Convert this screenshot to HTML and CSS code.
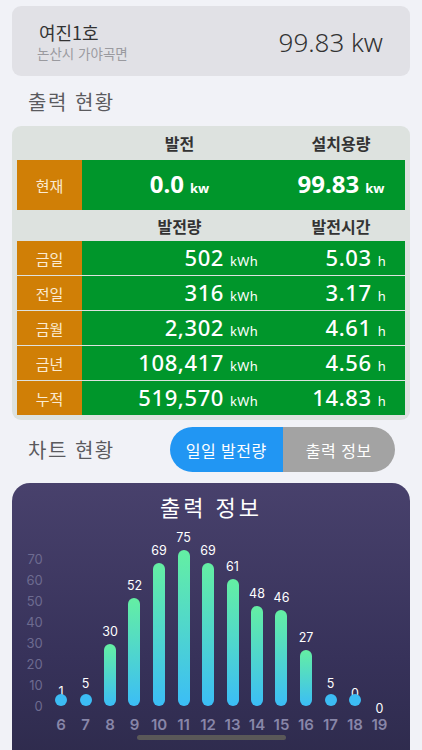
FILE: index.html
```html
<!DOCTYPE html>
<html lang="ko">
<head>
<meta charset="utf-8">
<title>여진1호</title>
<link rel="stylesheet" href="styles.css">
</head>
<body>
<div class="site">
  <div class="site-info">
    <div class="site-name">여진1호</div>
    <div class="site-addr">논산시 가야곡면</div>
  </div>
  <div class="site-cap">99.83 kw</div>
</div>

<h2 class="section-title first">출력 현황</h2>

<div class="table">
  <div class="trow head">
    <div></div><div class="hc">발전</div><div class="hc">설치용량</div>
  </div>
  <div class="trow now">
    <div class="lab">현재</div>
    <div class="nc">0.0<span class="nu">kw</span></div>
    <div class="nc">99.83<span class="nu">kw</span></div>
  </div>
  <div class="trow head head2">
    <div></div><div class="hc">발전량</div><div class="hc">발전시간</div>
  </div>
  <div class="rows">
    <div class="trow data"><div class="lab">금일</div><div class="dc">502<span class="du">kWh</span></div><div class="dc">5.03<span class="du">h</span></div></div>
    <div class="trow data"><div class="lab">전일</div><div class="dc">316<span class="du">kWh</span></div><div class="dc">3.17<span class="du">h</span></div></div>
    <div class="trow data"><div class="lab">금월</div><div class="dc">2,302<span class="du">kWh</span></div><div class="dc">4.61<span class="du">h</span></div></div>
    <div class="trow data"><div class="lab">금년</div><div class="dc">108,417<span class="du">kWh</span></div><div class="dc">4.56<span class="du">h</span></div></div>
    <div class="trow data"><div class="lab">누적</div><div class="dc">519,570<span class="du">kWh</span></div><div class="dc">14.83<span class="du">h</span></div></div>
  </div>
</div>

<div class="chart-head">
  <h2 class="section-title">차트 현황</h2>
  <div class="toggle">
    <div class="tg active">일일 발전량</div>
    <div class="tg">출력 정보</div>
  </div>
</div>

<div class="chart">
  <div class="chart-title">출력 정보</div>
  <div class="plot">
    <div class="yaxis">
      <div>70</div><div>60</div><div>50</div><div>40</div><div>30</div><div>20</div><div>10</div><div>0</div>
    </div>
    <div class="cols">
      <div class="col"><div class="stack"><div class="val" style="margin-bottom:-5px">1</div><div class="bar dot"></div></div><div class="xl">6</div></div>
      <div class="col"><div class="stack"><div class="val" style="margin-bottom:3px">5</div><div class="bar dot"></div></div><div class="xl">7</div></div>
      <div class="col"><div class="stack"><div class="val">30</div><div class="bar" style="height:62px"></div></div><div class="xl">8</div></div>
      <div class="col"><div class="stack"><div class="val">52</div><div class="bar" style="height:108px"></div></div><div class="xl">9</div></div>
      <div class="col"><div class="stack"><div class="val">69</div><div class="bar" style="height:143px"></div></div><div class="xl">10</div></div>
      <div class="col"><div class="stack"><div class="val">75</div><div class="bar" style="height:156px"></div></div><div class="xl">11</div></div>
      <div class="col"><div class="stack"><div class="val">69</div><div class="bar" style="height:143px"></div></div><div class="xl">12</div></div>
      <div class="col"><div class="stack"><div class="val">61</div><div class="bar" style="height:127px"></div></div><div class="xl">13</div></div>
      <div class="col"><div class="stack"><div class="val">48</div><div class="bar" style="height:100px"></div></div><div class="xl">14</div></div>
      <div class="col"><div class="stack"><div class="val">46</div><div class="bar" style="height:96px"></div></div><div class="xl">15</div></div>
      <div class="col"><div class="stack"><div class="val">27</div><div class="bar" style="height:56px"></div></div><div class="xl">16</div></div>
      <div class="col"><div class="stack"><div class="val" style="margin-bottom:3px">5</div><div class="bar dot"></div></div><div class="xl">17</div></div>
      <div class="col"><div class="stack"><div class="val" style="margin-bottom:-7px">0</div><div class="bar dot"></div></div><div class="xl">18</div></div>
      <div class="col"><div class="stack"><div class="val" style="margin-bottom:-10px">0</div></div><div class="xl">19</div></div>
    </div>
  </div>
  <div class="scroll"></div>
</div>
</body>
</html>
```

FILE: styles.css
```css
* { box-sizing: border-box; }
html, body { margin: 0; padding: 0; }
body {
  width: 422px;
  height: 750px;
  overflow: hidden;
  background: #f1f2f7;
  font-family: "Noto Sans CJK KR", "Noto Sans", sans-serif;
  color: #333;
}

.site {
  margin: 6px 12px 0;
  height: 70px;
  background: #e1e1e6;
  border-radius: 9px;
  display: flex;
  align-items: center;
  justify-content: space-between;
  padding: 0 27px 0 27px;
}
.site-info { display: flex; flex-direction: column; }
.site-name { font-size: 18px; line-height: 24px; color: #333; }
.site-addr { font-size: 13.5px; line-height: 18px; color: #9a9a9f; margin-left: -2px; }
.site-cap { font-family: "Noto Sans", sans-serif; font-size: 26px; font-weight: 300; color: #333; padding-top: 2px; }

.section-title {
  margin: 0;
  font-size: 20px;
  font-weight: 400;
  line-height: 26px;
  letter-spacing: 1.5px;
  color: #5a5a5e;
}
.section-title.first { margin: 13px 0 11px 28px; }

.table {
  margin: 0 12px;
  background: #dde2df;
  border-radius: 9px;
  padding: 0 5px 5px;
}
.trow {
  display: grid;
  grid-template-columns: 65px 195px 128px;
  align-items: stretch;
}
.head { height: 34px; }
.head2 { height: 31px; }
.hc {
  display: flex; align-items: center; justify-content: center;
  font-size: 16px; font-weight: 700; color: #333;
}
.lab {
  background: #d07f06;
  color: #fbebd2;
  font-size: 15px;
  display: flex; align-items: center; justify-content: center;
}
.now { height: 50px; background: #00962b; }
.nc {
  background: #00962b;
  color: #fff;
  display: flex; align-items: baseline; justify-content: center;
  font-family: "Noto Sans", sans-serif;
  font-size: 24px; font-weight: 700;
  padding-top: 7px;
}
.nu { font-size: 13px; font-weight: 700; margin-left: 6px; }
.rows { display: flex; flex-direction: column; gap: 1px; }
.data { height: 34px; }
.dc {
  background: #00962b;
  color: #fff;
  display: flex; align-items: baseline; justify-content: flex-end;
  padding-right: 19px;
  font-family: "Noto Sans", sans-serif;
  font-size: 22px; font-weight: 500;
  letter-spacing: 0.6px;
  padding-top: 1px;
}
.du { font-size: 13px; font-weight: 400; margin-left: 6px; letter-spacing: 0.3px; }

.chart-head {
  display: flex;
  align-items: center;
  justify-content: space-between;
  margin: 7px 27px 0 28px;
  height: 45px;
}
.toggle {
  display: flex;
  width: 225px;
  height: 45px;
  border-radius: 23px;
  overflow: hidden;
}
.tg {
  flex: 1;
  background: #a3a3a3;
  color: #fff;
  font-size: 16px;
  letter-spacing: 0.5px;
  display: flex; align-items: center; justify-content: center;
}
.tg.active { background: #2196f3; }

.chart {
  margin: 11px 12px 0;
  height: 290px;
  border-radius: 18px;
  background: linear-gradient(to bottom, #48416c 0%, #37325a 60%, #2d2a4b 100%);
  padding-top: 8px;
}
.chart-title {
  text-align: center;
  color: #fff;
  font-size: 22px;
  line-height: 30px;
  letter-spacing: 3px;
}
.plot { display: flex; }
.yaxis {
  width: 36.75px;
  padding-top: 27.5px;
  padding-right: 6px;
  font-family: "Inter", "Noto Sans", sans-serif;
  font-size: 13px;
  color: #6d6b90;
  text-align: right;
}
.yaxis div { height: 21px; line-height: 21px; }
.cols { display: flex; }
.col { width: 24.5px; display: flex; flex-direction: column; align-items: center; }
.stack {
  height: 185px;
  display: flex; flex-direction: column; justify-content: flex-end; align-items: center;
}
.val {
  font-family: "Inter", "Noto Sans", sans-serif;
  font-size: 12.5px;
  line-height: 14px;
  color: #fff;
  margin-bottom: 5px;
}
.bar {
  width: 12px;
  border-radius: 6px;
  background: linear-gradient(to bottom, #64efa3, #3bbdf6);
}
.bar.dot { height: 12px; background: #3cbcf4; }
.xl {
  margin-top: 9px;
  height: 20px;
  line-height: 20px;
  font-family: "Inter", "Noto Sans", sans-serif;
  font-size: 15px;
  font-weight: 600;
  color: #8886a8;
}
.scroll {
  width: 149px;
  height: 5px;
  border-radius: 3px;
  background: #5a5858;
  margin: 0 auto;
}
```
